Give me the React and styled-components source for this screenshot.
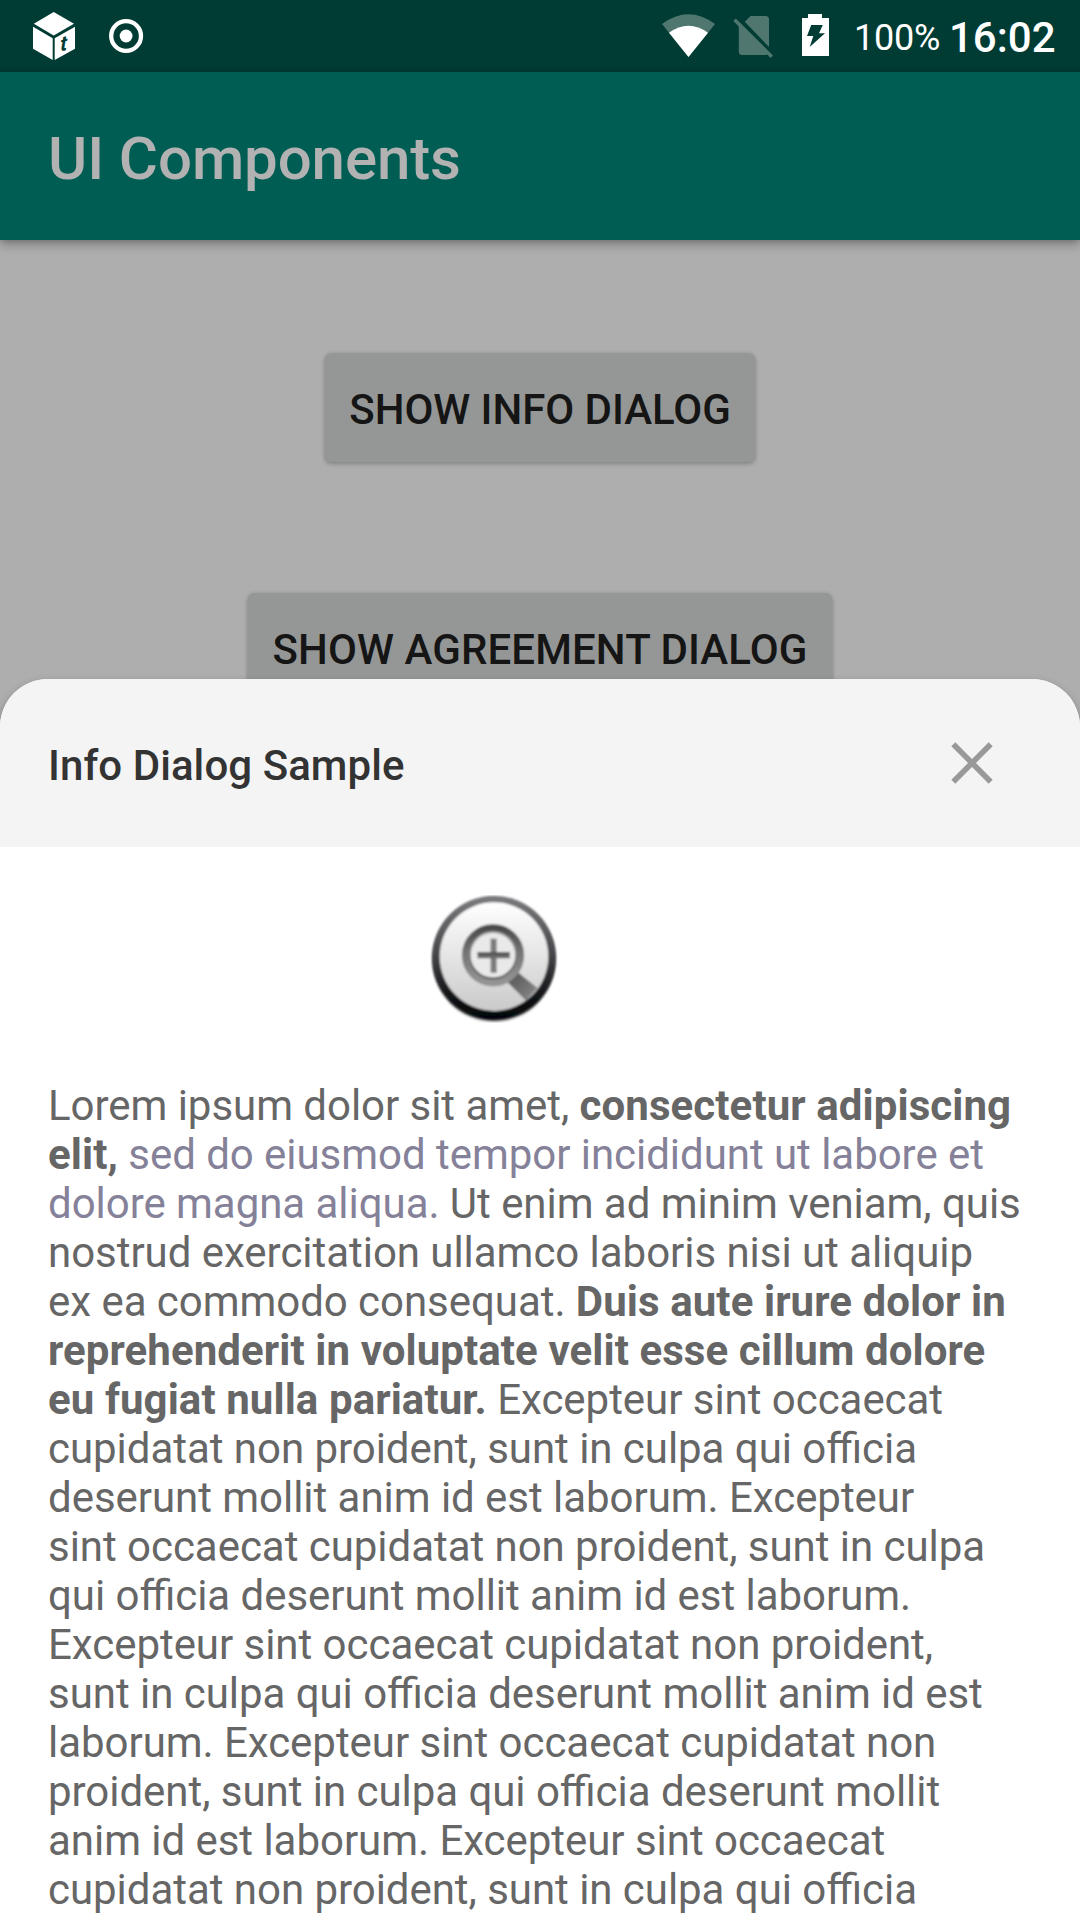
import React from "react";
import styled, { createGlobalStyle } from "styled-components";

const GlobalStyle = createGlobalStyle`
  * { box-sizing: border-box; }
  body { margin: 0; overflow: hidden; font-family: Roboto, sans-serif; }
  svg { display: block; flex: none; }
`;

const Screen = styled.div`
  position: relative;
  display: flex;
  flex-direction: column;
  width: 1080px;
  height: 1920px;
  overflow: hidden;
  background: #aeaeae;
`;

const StatusBar = styled.header`
  display: flex;
  align-items: flex-start;
  justify-content: space-between;
  height: 72px;
  background: #003c34;
  color: #fff;
`;

const StatusGroup = styled.div`
  display: flex;
  align-items: flex-start;
  height: 72px;
`;

const BatteryLevel = styled.span`
  width: 95px;
  padding-top: 17px;
  font-size: 36px;
  letter-spacing: -0.2px;
  line-height: 42px;
`;

const Clock = styled.span`
  width: 131px;
  padding-top: 13px;
  font-size: 42px;
  font-weight: 500;
  line-height: 49px;
`;

const Toolbar = styled.div`
  z-index: 1;
  display: flex;
  align-items: center;
  height: 168px;
  padding: 5px 48px 0;
  background: #005d53;
  box-shadow: 0 4px 10px rgba(0, 0, 0, 0.32), 0 0 4px rgba(0, 0, 0, 0.12);
`;

const ToolbarTitle = styled.h1`
  margin: 0;
  color: #b2b2b2;
  font-size: 60px;
  font-weight: 500;
  letter-spacing: -0.1px;
  line-height: 70px;
`;

const Content = styled.main`
  display: flex;
  flex-direction: column;
  align-items: center;
  gap: 131px;
  padding-top: 113px;
`;

const DialogButton = styled.button`
  height: 109px;
  width: ${(p) => p.$width}px;
  padding: 4px 0 0;
  border: 0;
  border-radius: 6px;
  background: #959796;
  box-shadow: 0 2px 4px rgba(0, 0, 0, 0.22), 0 0 4px rgba(0, 0, 0, 0.08);
  color: #151515;
  font: 500 42px/49px Roboto, sans-serif;
  letter-spacing: ${(p) => p.$tracking}px;
  text-transform: uppercase;
  white-space: nowrap;
`;

const Sheet = styled.section`
  position: absolute;
  z-index: 2;
  left: 0;
  right: 0;
  top: 679px;
  bottom: 0;
  overflow: hidden;
  border-radius: 48px 48px 0 0;
  background: #fff;
  box-shadow: 0 4px 8px rgba(0, 0, 0, 0.3);
`;

const SheetHeader = styled.div`
  display: flex;
  align-items: center;
  justify-content: space-between;
  height: 168px;
  padding: 0 84px 0 48px;
  background: #f4f4f4;
`;

const SheetTitle = styled.h2`
  margin: 0;
  padding-top: 5px;
  color: #333;
  font-size: 42px;
  font-weight: 500;
  letter-spacing: 0.06px;
  line-height: 49px;
`;

const CloseButton = styled.button`
  width: 48px;
  height: 48px;
  padding: 0;
  border: 0;
  background: none;
`;

const SheetBody = styled.div`
  padding: 48px 48px 0;
`;

const Illustration = styled.div`
  display: flex;
  justify-content: center;
  width: 891px;
  height: 186px;
`;

const Message = styled.p`
  width: 984px;
  margin: 0;
  color: #666;
  font-size: 42px;
  font-feature-settings: "liga" 1;
  letter-spacing: -0.04px;
  line-height: 49px;
  white-space: nowrap;
`;

const Line = styled.span`
  display: block;
`;

const Strong = styled.b`
  font-weight: 700;
  letter-spacing: 0.08px;
`;

const Accent = styled.span`
  color: #848199;
`;

const Notifications = () => (
  <svg width="160" height="72" viewBox="0 0 160 72" fill="#fff">
    <path d="M53.7 12 74 23.7 53.7 35.6 33.8 23.7Z" />
    <path d="M33 26.7 52.7 38.2V60L33 48.7Z" />
    <path d="M54.7 38.2 75 26.7V48.7L54.7 60Z" />
    <text
      transform="translate(60.3 51.6) skewY(-14)"
      fill="#003c34"
      fontFamily="Roboto, sans-serif"
      fontSize="21"
      fontWeight="700"
      fontStyle="italic"
    >
      t
    </text>
    <circle cx="126.1" cy="36" r="14.9" fill="none" stroke="#fff" strokeWidth="4.3" />
    <circle cx="126.1" cy="36" r="6.4" />
  </svg>
);

const SystemIcons = () => (
  <svg width="197" height="72" viewBox="657 0 197 72">
    <path d="M662 24Q688.5 4.5 715 24L688.5 57Z" fill="#4f7770" />
    <path d="M669 32.7Q688.5 18.8 708 32.7L688.5 57Z" fill="#fff" />
    <g fill="#4f7770">
      <path d="M744.8 21.8 750.5 16H765.5Q769 16 769 19.5V47Z" />
      <path d="M733.3 21 735.8 18.5 773 55.4 770.4 58 767.4 54.6Q766.6 55 765.5 55H742.4Q738.8 55 738.8 51.5V26.5Z" />
    </g>
    <path
      fillRule="evenodd"
      fill="#fff"
      d="M802 18H808V14H822V18H829V56H802ZM811.2 25 807 36H813.3L809.7 47 825 33.3H819L822.8 25Z"
    />
  </svg>
);

const CloseIcon = () => (
  <svg width="48" height="48" viewBox="-24 -24 48 48">
    <path d="M-18.7-18.7 18.7 18.7M18.7-18.7-18.7 18.7" stroke="#999" strokeWidth="5.6" />
  </svg>
);

const ZoomInIcon = () => (
  <svg width="128" height="128" viewBox="429.7 895 128 128">
    <defs>
      <linearGradient id="rim" x1="0" y1="0" x2="0" y2="1">
        <stop offset="0" stopColor="#7c7b7e" />
        <stop offset="0.45" stopColor="#49494c" />
        <stop offset="0.8" stopColor="#131417" />
        <stop offset="1" stopColor="#020406" />
      </linearGradient>
      <linearGradient id="face" x1="0" y1="0" x2="0" y2="1">
        <stop offset="0" stopColor="#ffffff" />
        <stop offset="1" stopColor="#cacaca" />
      </linearGradient>
      <linearGradient id="lens" x1="0" y1="0" x2="0" y2="1">
        <stop offset="0" stopColor="#4c4c4c" />
        <stop offset="0.45" stopColor="#757575" />
        <stop offset="1" stopColor="#949494" />
      </linearGradient>
      <linearGradient id="innerLens" x1="0" y1="0" x2="0" y2="1">
        <stop offset="0" stopColor="#aaaaaa" />
        <stop offset="1" stopColor="#4e4e4e" />
      </linearGradient>
      <linearGradient id="handle" x1="0" y1="0" x2="1" y2="1">
        <stop offset="0.2" stopColor="#5c5c5c" />
        <stop offset="1" stopColor="#8c8c8c" />
      </linearGradient>
      <filter id="soft" x="-10%" y="-10%" width="120%" height="120%">
        <feGaussianBlur stdDeviation="0.9" />
      </filter>
      <filter id="shade" x="-10%" y="-10%" width="120%" height="120%">
        <feGaussianBlur stdDeviation="1.4" />
      </filter>
    </defs>
    <circle cx="493.7" cy="960.5" r="61" fill="#000" opacity="0.55" filter="url(#shade)" />
    <g filter="url(#soft)">
      <circle cx="493.7" cy="957.8" r="62" fill="url(#rim)" />
      <circle cx="493.7" cy="956.6" r="54.3" fill="url(#face)" />
      <path d="M516 971 537 988 525.5 1000.5 507 982Z" fill="url(#handle)" />
      <circle cx="492.7" cy="955.3" r="26.6" fill="none" stroke="url(#lens)" strokeWidth="9" />
      <circle cx="492.7" cy="955.3" r="23.2" fill="#e9e9e9" stroke="url(#innerLens)" strokeWidth="1.8" />
      <path d="M493.3 938.7V972.7" stroke="#7c7c7c" strokeWidth="6" />
      <path d="M477.3 955.3H509.5" stroke="#666666" strokeWidth="6" />
      <path d="M477.3 953.3H509.5" stroke="#4c4c4c" strokeWidth="2" />
    </g>
  </svg>
);

const closingLines = [
  "cupidatat non proident, sunt in culpa qui officia",
  "deserunt mollit anim id est laborum. Excepteur",
  "sint occaecat cupidatat non proident, sunt in culpa",
  "qui officia deserunt mollit anim id est laborum.",
  "Excepteur sint occaecat cupidatat non proident,",
  "sunt in culpa qui officia deserunt mollit anim id est",
  "laborum. Excepteur sint occaecat cupidatat non",
  "proident, sunt in culpa qui officia deserunt mollit",
  "anim id est laborum. Excepteur sint occaecat",
  "cupidatat non proident, sunt in culpa qui officia",
];

export default function App() {
  return (
    <>
      <GlobalStyle />
      <Screen>
        <StatusBar>
          <Notifications />
          <StatusGroup>
            <SystemIcons />
            <BatteryLevel>100%</BatteryLevel>
            <Clock>16:02</Clock>
          </StatusGroup>
        </StatusBar>
        <Toolbar>
          <ToolbarTitle>UI Components</ToolbarTitle>
        </Toolbar>
        <Content>
          <DialogButton $width={430} $tracking={-0.05}>
            Show info dialog
          </DialogButton>
          <DialogButton $width={584} $tracking={0.1}>
            Show agreement dialog
          </DialogButton>
        </Content>
        <Sheet>
          <SheetHeader>
            <SheetTitle>Info Dialog Sample</SheetTitle>
            <CloseButton aria-label="Close">
              <CloseIcon />
            </CloseButton>
          </SheetHeader>
          <SheetBody>
            <Illustration>
              <ZoomInIcon />
            </Illustration>
            <Message>
              <Line>
                Lorem ipsum dolor sit amet, <Strong>consectetur adipiscing</Strong>
              </Line>
              <Line>
                <Strong>elit,</Strong> <Accent>sed do eiusmod tempor incididunt ut labore et</Accent>
              </Line>
              <Line>
                <Accent>dolore magna aliqua.</Accent> Ut enim ad minim veniam, quis
              </Line>
              <Line>nostrud exercitation ullamco laboris nisi ut aliquip</Line>
              <Line>
                ex ea commodo consequat. <Strong>Duis aute irure dolor in</Strong>
              </Line>
              <Line>
                <Strong>reprehenderit in voluptate velit esse cillum dolore</Strong>
              </Line>
              <Line>
                <Strong>eu fugiat nulla pariatur.</Strong> Excepteur sint occaecat
              </Line>
              {closingLines.map((text, i) => (
                <Line key={i}>{text}</Line>
              ))}
            </Message>
          </SheetBody>
        </Sheet>
      </Screen>
    </>
  );
}
